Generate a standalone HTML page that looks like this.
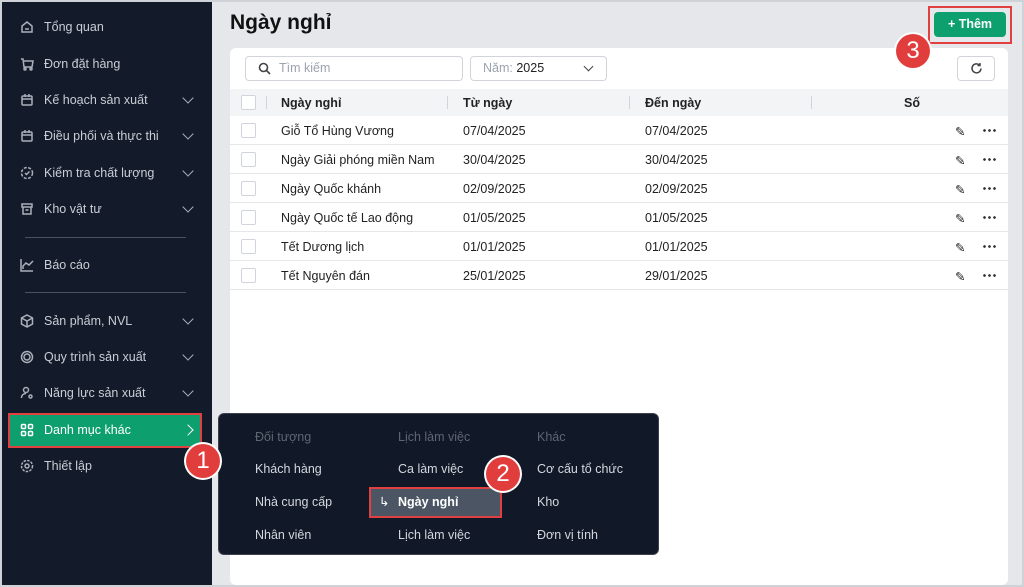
<!DOCTYPE html>
<html><head><meta charset="utf-8"><style>
*{box-sizing:border-box;margin:0;padding:0}
html,body{width:1024px;height:587px;overflow:hidden}
body{font-family:"Liberation Sans","Noto Sans CJK SC",sans-serif;background:#e5e7eb;position:relative;font-size:13px}
.frame{position:absolute;left:0;top:0;width:1024px;height:587px;border:2px solid #cfd2d6;pointer-events:none;z-index:20}
.sb{position:absolute;left:0;top:0;width:212px;height:587px;background:#131a29;color:#c9ced6}
.it{position:absolute;left:20px;width:172px;height:20px;display:flex;align-items:center;font-size:12.5px}
.it svg{width:14px;height:14px;margin-right:10px;stroke:#aab0ba;fill:none;stroke-width:1.5;flex:none}
.chev{position:absolute;right:0;top:4px;width:8px;height:8px;border-right:1.5px solid #aab0ba;border-bottom:1.5px solid #aab0ba;transform:rotate(45deg)}
.hr{position:absolute;left:25px;width:161px;height:1px;background:#4a5160}
.abs{position:absolute}
.card{position:absolute;left:230px;top:48px;width:778px;height:537px;background:#fff;border-radius:6px}
.th{position:absolute;left:230px;top:89px;width:778px;height:27px;background:#f3f4f6;font-weight:bold;font-size:12.5px;color:#222}
.row{position:absolute;left:230px;width:778px;height:29px;border-bottom:1px solid #e5e7eb;font-size:12.5px;color:#222}
.cb{position:absolute;left:11px;top:7px;width:15px;height:15px;border:1px solid #d1d5db;border-radius:2px;background:#fff}
.c1{position:absolute;left:51px;top:8px}.c2{position:absolute;left:233px;top:8px}.c3{position:absolute;left:415px;top:8px}
.dots{position:absolute;left:752px;top:13px;width:14px;height:3px;background:radial-gradient(circle,#333 1.2px,transparent 1.5px) 0 0/5px 3px repeat-x}
.pen{position:absolute;left:725px;top:8px}
.badge{position:absolute;width:34px;height:34px;border-radius:50%;background:#e23d3d;color:#fff;font-size:24px;text-align:center;line-height:34px;box-shadow:0 0 0 2px #fff;z-index:10}
.pop{position:absolute;left:218px;top:413px;width:441px;height:142px;background:#111827;border-radius:6px;border:1px solid #3a404c}
.pop div{position:absolute;font-size:12.5px;color:#d4d8de}
.pop .h{color:#5e6573}
</style></head><body>
<div class="sb">
 <div class="it" style="top:17px"><svg viewBox="0 0 14 14"><path d="M2 6L7 2l5 4v6H2z"/><path d="M5 9h4"/></svg>Tổng quan</div>
 <div class="it" style="top:54px"><svg viewBox="0 0 14 14"><path d="M1 2h2l1 8h8l1-6H4"/><circle cx="5" cy="12" r="1"/><circle cx="11" cy="12" r="1"/></svg>Đơn đặt hàng</div>
 <div class="it" style="top:90px"><svg viewBox="0 0 14 14"><rect x="2" y="3" width="10" height="9" rx="1"/><path d="M2 6h10M5 1v3M9 1v3"/></svg>Kế hoạch sản xuất<span class="chev"></span></div>
 <div class="it" style="top:126px"><svg viewBox="0 0 14 14"><rect x="2" y="3" width="10" height="9" rx="1"/><path d="M2 6h10M5 1v3M9 1v3"/></svg>Điều phối và thực thi<span class="chev"></span></div>
 <div class="it" style="top:163px"><svg viewBox="0 0 14 14"><circle cx="7" cy="7" r="5.5" stroke-dasharray="3 1.5"/><path d="M5 7l1.5 1.5L9.5 5.5"/></svg>Kiểm tra chất lượng<span class="chev"></span></div>
 <div class="it" style="top:199px"><svg viewBox="0 0 14 14"><rect x="2" y="2" width="10" height="3"/><path d="M3 5v7h8V5M5.5 8h3"/></svg>Kho vật tư<span class="chev"></span></div>
 <div class="hr" style="top:237px"></div>
 <div class="it" style="top:255px"><svg viewBox="0 0 14 14"><path d="M1 1v12h12M3 11V8l3-3 3 2 4-4"/></svg>Báo cáo</div>
 <div class="hr" style="top:292px"></div>
 <div class="it" style="top:311px"><svg viewBox="0 0 14 14"><path d="M7 1l5.5 3v6L7 13 1.5 10V4zM1.5 4L7 7l5.5-3M7 7v6"/></svg>Sản phẩm, NVL<span class="chev"></span></div>
 <div class="it" style="top:347px"><svg viewBox="0 0 14 14"><circle cx="7" cy="7" r="5.5"/><circle cx="7" cy="7" r="3"/></svg>Quy trình sản xuất<span class="chev"></span></div>
 <div class="it" style="top:383px"><svg viewBox="0 0 14 14"><circle cx="6" cy="4" r="2.5"/><path d="M1.5 12c0-3 2-4.5 4.5-4.5"/><circle cx="10.5" cy="10.5" r="1.5"/></svg>Năng lực sản xuất<span class="chev"></span></div>
 <div class="abs" style="left:8px;top:413px;width:194px;height:35px;background:#0e9f6e;border:2px solid #e04040"></div>
 <div class="it" style="top:420px;color:#fff"><svg viewBox="0 0 14 14" style="stroke:#fff"><rect x="1.5" y="1.5" width="4" height="4" rx="1"/><rect x="8.5" y="1.5" width="4" height="4" rx="1"/><rect x="1.5" y="8.5" width="4" height="4" rx="1"/><rect x="8.5" y="8.5" width="4" height="4" rx="1"/></svg>Danh mục khác<span class="chev" style="transform:rotate(-45deg);border-color:#fff;top:6px"></span></div>
 <div class="it" style="top:456px"><svg viewBox="0 0 14 14"><circle cx="7" cy="7" r="2"/><circle cx="7" cy="7" r="5.5" stroke-dasharray="2.5 1.2"/></svg>Thiết lập<span class="chev" style="transform:rotate(-45deg);top:6px"></span></div>
</div>
<div class="abs" style="left:230px;top:11px;font-size:21px;font-weight:bold;color:#111">Ngày nghỉ</div>
<div class="abs" style="left:928px;top:6px;width:84px;height:38px;border:2px solid #e04040"></div>
<div class="abs" style="left:934px;top:12px;width:72px;height:25px;background:#0e9f6e;border-radius:4px;color:#fff;font-weight:bold;font-size:12.5px;line-height:25px;text-align:center">+ Thêm</div>
<div class="card"></div>
<div class="abs" style="left:245px;top:56px;width:218px;height:25px;border:1px solid #d1d5db;border-radius:4px;color:#9ca3af;font-size:12.5px;line-height:23px;padding-left:33px">Tìm kiếm
 <svg style="position:absolute;left:12px;top:5px" width="13" height="13" viewBox="0 0 13 13" fill="none" stroke="#444" stroke-width="1.6"><circle cx="5.5" cy="5.5" r="4"/><path d="M8.5 8.5l3.5 3.5"/></svg></div>
<div class="abs" style="left:470px;top:56px;width:137px;height:25px;border:1px solid #d1d5db;border-radius:4px;font-size:12.5px;line-height:23px;padding-left:12px;color:#9ca3af">Năm: <span style="color:#222">2025</span>
 <span style="position:absolute;right:14px;top:6px;width:7px;height:7px;border-right:1.5px solid #444;border-bottom:1.5px solid #444;transform:rotate(45deg)"></span></div>
<div class="abs" style="left:957px;top:56px;width:38px;height:25px;border:1px solid #d1d5db;border-radius:4px">
 <svg style="position:absolute;left:12px;top:5px" width="13" height="13" viewBox="0 0 13 13" fill="none" stroke="#444" stroke-width="1.5"><path d="M11 6.5A4.5 4.5 0 1 1 9.5 3"/><path d="M10 1v2.5H7.5"/></svg></div>
<div class="th"><div class="cb" style="top:6px"></div>
 <div class="abs" style="left:36px;top:7px;width:1px;height:13px;background:#d1d5db"></div>
 <div class="c1" style="top:7px">Ngày nghỉ</div><div class="abs" style="left:217px;top:7px;width:1px;height:13px;background:#d1d5db"></div>
 <div class="c2" style="top:7px">Từ ngày</div><div class="abs" style="left:399px;top:7px;width:1px;height:13px;background:#d1d5db"></div>
 <div class="c3" style="top:7px">Đến ngày</div><div class="abs" style="left:581px;top:7px;width:1px;height:13px;background:#d1d5db"></div>
 <div class="abs" style="left:674px;top:7px">Số</div></div>
<div class="row" style="top:116px"><div class="cb"></div><div class="c1">Giỗ Tổ Hùng Vương</div><div class="c2">07/04/2025</div><div class="c3">07/04/2025</div><div class="pen">✎</div><div class="dots"></div></div>
<div class="row" style="top:145px"><div class="cb"></div><div class="c1">Ngày Giải phóng miền Nam</div><div class="c2">30/04/2025</div><div class="c3">30/04/2025</div><div class="pen">✎</div><div class="dots"></div></div>
<div class="row" style="top:174px"><div class="cb"></div><div class="c1">Ngày Quốc khánh</div><div class="c2">02/09/2025</div><div class="c3">02/09/2025</div><div class="pen">✎</div><div class="dots"></div></div>
<div class="row" style="top:203px"><div class="cb"></div><div class="c1">Ngày Quốc tế Lao động</div><div class="c2">01/05/2025</div><div class="c3">01/05/2025</div><div class="pen">✎</div><div class="dots"></div></div>
<div class="row" style="top:232px"><div class="cb"></div><div class="c1">Tết Dương lịch</div><div class="c2">01/01/2025</div><div class="c3">01/01/2025</div><div class="pen">✎</div><div class="dots"></div></div>
<div class="row" style="top:261px"><div class="cb"></div><div class="c1">Tết Nguyên đán</div><div class="c2">25/01/2025</div><div class="c3">29/01/2025</div><div class="pen">✎</div><div class="dots"></div></div>
<div class="pop">
 <div class="h" style="left:36px;top:16px">Đối tượng</div><div class="h" style="left:179px;top:16px">Lịch làm việc</div><div class="h" style="left:318px;top:16px">Khác</div>
 <div style="left:36px;top:48px">Khách hàng</div><div style="left:179px;top:48px">Ca làm việc</div><div style="left:318px;top:48px">Cơ cấu tổ chức</div>
 <div style="left:150px;top:73px;width:133px;height:31px;background:#4b5563;border:2px solid #e04040"></div>
 <div style="left:36px;top:81px">Nhà cung cấp</div><div style="left:160px;top:80px;color:#fff">↳</div><div style="left:179px;top:81px;color:#fff;font-weight:bold">Ngày nghỉ</div><div style="left:318px;top:81px">Kho</div>
 <div style="left:36px;top:114px">Nhân viên</div><div style="left:179px;top:114px">Lịch làm việc</div><div style="left:318px;top:114px">Đơn vị tính</div>
</div>
<div class="badge" style="left:186px;top:444px">1</div>
<div class="badge" style="left:486px;top:457px">2</div>
<div class="badge" style="left:896px;top:34px">3</div>
<div class="frame"></div>
</body></html>
